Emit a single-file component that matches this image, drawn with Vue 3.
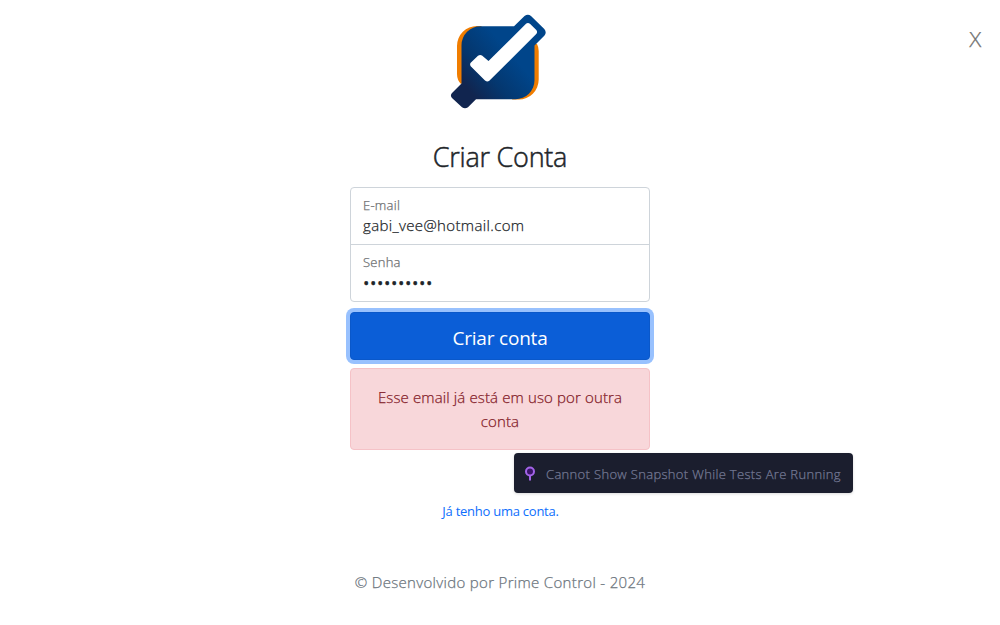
<script setup>
import { ref } from 'vue'

const email = ref('gabi_vee@hotmail.com')
const mask = '•'.repeat(10)
</script>

<template>
  <main class="page">
    <button class="close" type="button">
      <span>X</span>
    </button>

    <form class="signup" @submit.prevent>
      <svg class="logo" viewBox="0 0 120 115" width="120" height="115" aria-hidden="true">
        <defs>
          <linearGradient id="navy" gradientUnits="userSpaceOnUse" x1="25" y1="90" x2="72" y2="50">
            <stop offset="0.1" stop-color="#11254f" />
            <stop offset="0.5" stop-color="#04376f" />
            <stop offset="1" stop-color="#00458a" />
          </linearGradient>
        </defs>
        <path
          fill="#f07d00"
          d="M42 21H37A20 20 0 0 0 17 41V69Q17 75 21 79L28 75V35ZM94 38L97 39Q98.700 42 98.700 46V74.500A20 20 0 0 1 78.700 94.500H72Z"
        />
        <path
          fill="url(#navy)"
          d="M40.500 21.300H74L84.500 11Q88 8.500 91 11L104.300 24Q107 27.500 104.500 30.500L94.500 40.500V75.300A19 19 0 0 1 75.500 94.300H36L28 102.200Q25 104.500 22 102.200L12 93Q9.800 90.500 12 88L21.500 78.500V40.300A19 19 0 0 1 40.500 21.300Z"
        />
        <path
          fill="#fff"
          d="M48.500 56L86 18.800Q88 17.300 90.200 19L96.300 25Q98 27 96 29.200L49.300 75.800Q47.300 77.500 45 75.500L30.700 61.200Q29.500 59.500 30.700 57.800L38 50.800Q40 49.200 42 50.500Z"
        />
      </svg>

      <h1 class="title"><span>Criar Conta</span></h1>

      <div class="fields">
        <label class="field">
          <span class="caption">E-mail</span>
          <span class="value">{{ email }}</span>
        </label>
        <label class="field">
          <span class="caption">Senha</span>
          <span class="value dots">{{ mask }}</span>
        </label>
      </div>

      <button class="submit" type="submit"><span>Criar conta</span></button>

      <div class="alert" role="alert">Esse email já está em uso por outra conta</div>

      <a class="login"><span>Já tenho uma conta.</span></a>
      <p class="footer"><span>© Desenvolvido por Prime Control - 2024</span></p>
    </form>

    <div class="tooltip">
      <svg class="pin" viewBox="0 0 12 16" width="12" height="16" aria-hidden="true">
        <path d="M6 9V14.500" stroke="#a364e8" stroke-width="2" />
        <circle cx="6" cy="5.500" r="4" fill="#3b1469" stroke="#a364e8" stroke-width="2" />
      </svg>
      <span>Cannot Show Snapshot While Tests Are Running</span>
    </div>
  </main>
</template>

<style>
body {
  background: #fff;
}
</style>

<style scoped>
.page {
  position: relative;
  box-sizing: border-box;
  height: 625px;
  overflow: hidden;
  padding-top: 5px;
  background: #fff;
  color: #212529;
  font-family: "Open Sans", "Noto Sans", sans-serif;
  font-size: 15px;
  font-weight: 300;
  -webkit-text-stroke: 0.25px currentColor;
}
.page * {
  box-sizing: border-box;
}
.close {
  position: absolute;
  top: 25px;
  right: 19px;
  padding: 0;
  border: 0;
  background: none;
  color: #707070;
  font: 300 20px/30px "Open Sans", sans-serif;
}
.close span {
  display: block;
  transform: scaleX(1.12);
}
.signup {
  display: flex;
  flex-direction: column;
  width: 300px;
  margin: 0 auto;
}
.logo {
  align-self: center;
  display: block;
}
.title {
  margin: 20px 0 0;
  height: 47px;
  font-size: 27px;
  font-weight: 300;
  letter-spacing: -0.25px;
  line-height: 34px;
  text-align: center;
  white-space: nowrap;
  -webkit-text-stroke-width: 0.5px;
}
.fields {
  border: 1px solid #ced4da;
  border-radius: 4px;
  height: 115px;
}
.field {
  display: flex;
  flex-direction: column;
  height: 56px;
  padding: 7px 12px 0;
}
.field + .field {
  height: 57px;
  border-top: 1px solid #ced4da;
}
.caption {
  color: #6c6e70;
  font-size: 13px;
  letter-spacing: 0.25px;
  line-height: 20px;
}
.value {
  font-size: 15px;
  line-height: 20px;
  letter-spacing: 0.36px;
}
.dots {
  padding-top: 1px;
  font-size: 17px;
  font-weight: 400;
  letter-spacing: 0.6px;
}
.submit {
  height: 48px;
  margin-top: 10px;
  padding: 4px 0 0;
  border: 1px solid #0a58ca;
  border-radius: 4px;
  background: #0b5ed7;
  box-shadow: 0 0 0 4px #98c1fe;
  color: #fff;
  font: 400 19px/28px "Open Sans", sans-serif;
  letter-spacing: -0.2px;
  -webkit-text-stroke-width: 0;
}
.alert {
  height: 82px;
  margin-top: 8px;
  padding: 16px 16px 0;
  border: 1px solid #f5c2c7;
  border-radius: 4px;
  background: #f8d7da;
  color: #842029;
  letter-spacing: 0.13px;
  line-height: 24px;
  text-align: center;
}
.login {
  margin-top: 50px;
  color: #0d6efd;
  font-size: 13px;
  font-weight: 400;
  letter-spacing: -0.25px;
  line-height: 22px;
  text-align: center;
  text-indent: 1px;
  -webkit-text-stroke-width: 0;
}
.footer {
  margin: 48px 0 0;
  color: #6c757d;
  letter-spacing: 0.32px;
  line-height: 24px;
  text-align: center;
  white-space: nowrap;
}
.tooltip {
  position: absolute;
  top: 453px;
  left: 514px;
  display: flex;
  align-items: center;
  width: 339px;
  height: 40px;
  padding: 2px 0 0 10px;
  border-radius: 4px;
  background: #1b1e2e;
  box-shadow: 0 1px 3px rgba(0, 0, 0, 0.15);
  color: #747994;
  font-size: 13px;
  letter-spacing: 0.33px;
  white-space: nowrap;
}
.pin {
  flex: none;
  margin-right: 10px;
}
</style>
